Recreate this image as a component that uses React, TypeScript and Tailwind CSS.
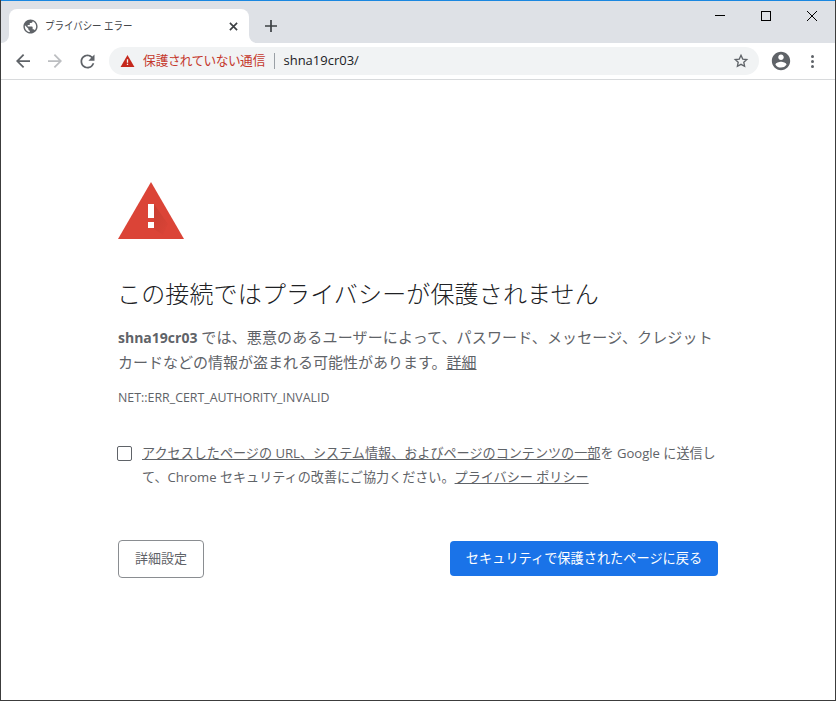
const font = "font-['Open_Sans','Noto_Sans_CJK_JP',sans-serif]"

const App = () => {
    return (
        <div className={`w-[836px] h-[701px] flex flex-col overflow-hidden bg-white border-x border-b border-[#3c3c3c] ${font}`}>
            {/* title bar */}
            <div className="h-[43px] shrink-0 flex items-end bg-[#dee1e6] border-t border-[#1a87e0] -mx-px">
                <div className="relative w-[240px] h-[34px] ml-[9px] bg-white rounded-t-[8px] flex items-center pl-[13px] pr-[11px]">
                    <div className="absolute -left-[8px] bottom-0 w-[8px] h-[8px] bg-white">
                        <div className="w-full h-full bg-[#dee1e6] rounded-br-[8px]"></div>
                    </div>
                    <div className="absolute -right-[8px] bottom-0 w-[8px] h-[8px] bg-white">
                        <div className="w-full h-full bg-[#dee1e6] rounded-bl-[8px]"></div>
                    </div>
                    <svg width="17" height="17" viewBox="0 0 24 24" fill="#5f6368" className="shrink-0">
                        <path d="M12 2C6.48 2 2 6.48 2 12s4.48 10 10 10 10-4.48 10-10S17.52 2 12 2zm-1 17.93c-3.95-.49-7-3.85-7-7.93 0-.62.08-1.21.21-1.79L9 15v1c0 1.1.9 2 2 2v1.93zm6.9-2.54c-.26-.81-1-1.39-1.9-1.39h-1v-3c0-.55-.45-1-1-1H8v-2h2c.55 0 1-.45 1-1V7h2c1.1 0 2-.9 2-2v-.41c2.93 1.19 5 4.06 5 7.41 0 2.08-.8 3.97-2.1 5.39z" />
                    </svg>
                    <span className="inline-block ml-[6px] mt-[1px] text-[11px] whitespace-pre origin-left scale-x-[0.86] text-[#45484c]">プライバシー エラー</span>
                    <svg width="9" height="9" viewBox="0 0 10 10" className="ml-auto" stroke="#3c4043" strokeWidth="1.8">
                        <path d="M1 1l8 8M9 1l-8 8" />
                    </svg>
                </div>
                <div className="w-[44px] h-[34px] flex items-center justify-center">
                    <svg width="12" height="12" viewBox="0 0 12 12" stroke="#3c4043" strokeWidth="1.7">
                        <path d="M6 0v12M0 6h12" />
                    </svg>
                </div>
                <div className="ml-auto self-start flex h-[29px] items-start mr-[1px]">
                    <div className="w-[46px] h-[29px] flex items-center justify-center">
                        <div className="w-[10px] h-px bg-black"></div>
                    </div>
                    <div className="w-[46px] h-[29px] flex items-center justify-center">
                        <div className="w-[10px] h-[10px] border border-black"></div>
                    </div>
                    <div className="w-[46px] h-[29px] flex items-center justify-center">
                        <svg width="10" height="10" viewBox="0 0 10 10" stroke="#000" strokeWidth="1">
                            <path d="M0 0l10 10M10 0L0 10" />
                        </svg>
                    </div>
                </div>
            </div>

            {/* toolbar */}
            <div className="h-[37px] shrink-0 flex items-center bg-white border-b border-[#d8dadc]">
                <div className="w-[16px] ml-[14px] flex justify-center">
                    <svg width="14" height="14" viewBox="0 0 16 16" fill="#5f6368">
                        <path d="M16 7H3.83l5.59-5.59L8 0 0 8l8 8 1.41-1.41L3.83 9H16z" />
                    </svg>
                </div>
                <div className="w-[16px] ml-[16px] flex justify-center">
                    <svg width="14" height="14" viewBox="0 0 16 16" fill="#bcbec1">
                        <path d="M0 7h12.17L6.58 1.41 8 0l8 8-8 8-1.41-1.41L12.17 9H0z" />
                    </svg>
                </div>
                <div className="w-[16px] ml-[16px] flex justify-center">
                    <svg width="21" height="21" viewBox="0 0 24 24" fill="#5f6368" className="shrink-0">
                        <path d="M17.65 6.35A7.96 7.96 0 0 0 12 4C7.58 4 4.01 7.58 4.01 12S7.58 20 12 20c3.73 0 6.84-2.55 7.73-6h-2.08A5.99 5.99 0 0 1 12 18c-3.31 0-6-2.69-6-6s2.69-6 6-6c1.66 0 3.14.69 4.22 1.78L13 11h7V4z" />
                    </svg>
                </div>
                <div className="w-[650px] h-[28px] ml-[14px] bg-[#f1f3f4] rounded-full flex items-center pl-[11px] pr-[10px]">
                    <svg width="15" height="12" viewBox="0 0 15 13" fill="#c5281c">
                        <path d="M7.5 0L15 13H0z" />
                        <path d="M6.8 4.5h1.4v4H6.8zM6.8 9.5h1.4v1.4H6.8z" fill="#f1f3f4" />
                    </svg>
                    <span className="ml-[8px] text-[12.7px] text-[#c5392d] [font-feature-settings:'palt']">保護されていない通信</span>
                    <div className="w-px h-[16px] ml-[9px] bg-[#9aa0a6]"></div>
                    <span className="ml-[8px] text-[13px] text-[#202124]">shna19cr03/</span>
                    <svg width="16" height="16" viewBox="0 0 24 24" fill="none" stroke="#5f6368" strokeWidth="2" className="ml-auto">
                        <path d="M12 3.5l2.6 5.6 6.1.7-4.5 4.2 1.2 6L12 17l-5.4 3 1.2-6-4.5-4.2 6.1-.7z" />
                    </svg>
                </div>
                <svg width="22" height="22" viewBox="0 0 24 24" fill="#5f6368" className="ml-[11px]">
                    <path d="M12 2C6.48 2 2 6.48 2 12s4.48 10 10 10 10-4.48 10-10S17.52 2 12 2zm0 3c1.66 0 3 1.34 3 3s-1.34 3-3 3-3-1.34-3-3 1.34-3 3-3zm0 14.2a7.2 7.2 0 0 1-6-3.22c.03-1.99 4-3.08 6-3.08s5.97 1.09 6 3.08a7.2 7.2 0 0 1-6 3.22z" />
                </svg>
                <div className="ml-[19px] flex flex-col gap-[2px]">
                    <div className="w-[3px] h-[3px] rounded-full bg-[#5f6368]"></div>
                    <div className="w-[3px] h-[3px] rounded-full bg-[#5f6368]"></div>
                    <div className="w-[3px] h-[3px] rounded-full bg-[#5f6368]"></div>
                </div>
            </div>

            {/* interstitial */}
            <main className="w-[600px] ml-[117px] pt-[102px] text-[#5f6368]">
                <svg width="66" height="57" viewBox="0 0 66 57" className="block">
                    <defs>
                        <linearGradient id="shade" x1="0" y1="0" x2="1" y2="1">
                            <stop offset="0" stopColor="#b93a2e" stopOpacity="0.7" />
                            <stop offset="1" stopColor="#b93a2e" stopOpacity="0" />
                        </linearGradient>
                    </defs>
                    <path d="M33 0L66 57H0z" fill="#db4437" />
                    <path d="M36 22l14 20-5 11-15-10v-2h6z" fill="url(#shade)" />
                    <path d="M30 22h6v14h-6zM30 40h6v6h-6z" fill="#fff" />
                </svg>
                <h1 className="mt-[37px] -ml-[1px] text-[24px] leading-[36px] font-light tracking-[0.15px] text-[#202124]">この接続ではプライバシーが保護されません</h1>
                <p className="mt-[13px] text-[15px] leading-[25px]">
                    <strong className="font-bold text-[14px]">shna19cr03</strong> <span className="tracking-[0.15px]">では、悪意のあるユーザーによって、パスワード、メッセージ、クレジット</span>カードなどの情報が盗まれる可能性があります。<span className="underline">詳細</span>
                </p>
                <div className="mt-[14px] text-[12.4px] leading-[18px]">NET::ERR_CERT_AUTHORITY_INVALID</div>
                <div className="mt-[34px] flex -ml-[1px]">
                    <div className="w-[15px] h-[15px] mt-[5px] shrink-0 border border-[#5f6368] rounded-[2px]"></div>
                    <p className="ml-[10px] text-[13.1px] leading-[24px]">
                        <span className="underline">アクセスしたページの URL、システム情報、およびページのコンテンツの一部</span>を Google に送信して、Chrome セキュリティの改善にご協力ください。<span className="underline">プライバシー ポリシー</span>
                    </p>
                </div>
                <div className="mt-[51px] flex items-start justify-between">
                    <button className="w-[86px] h-[38px] bg-white border border-[#8a8d91] rounded-[4px] text-[13px] text-[#5f6368]">詳細設定</button>
                    <button className="w-[268px] h-[35px] mt-[1px] bg-[#1a73e8] rounded-[4px] text-[13.2px] text-white">セキュリティで保護されたページに戻る</button>
                </div>
            </main>
        </div>
    )
}

export default App
